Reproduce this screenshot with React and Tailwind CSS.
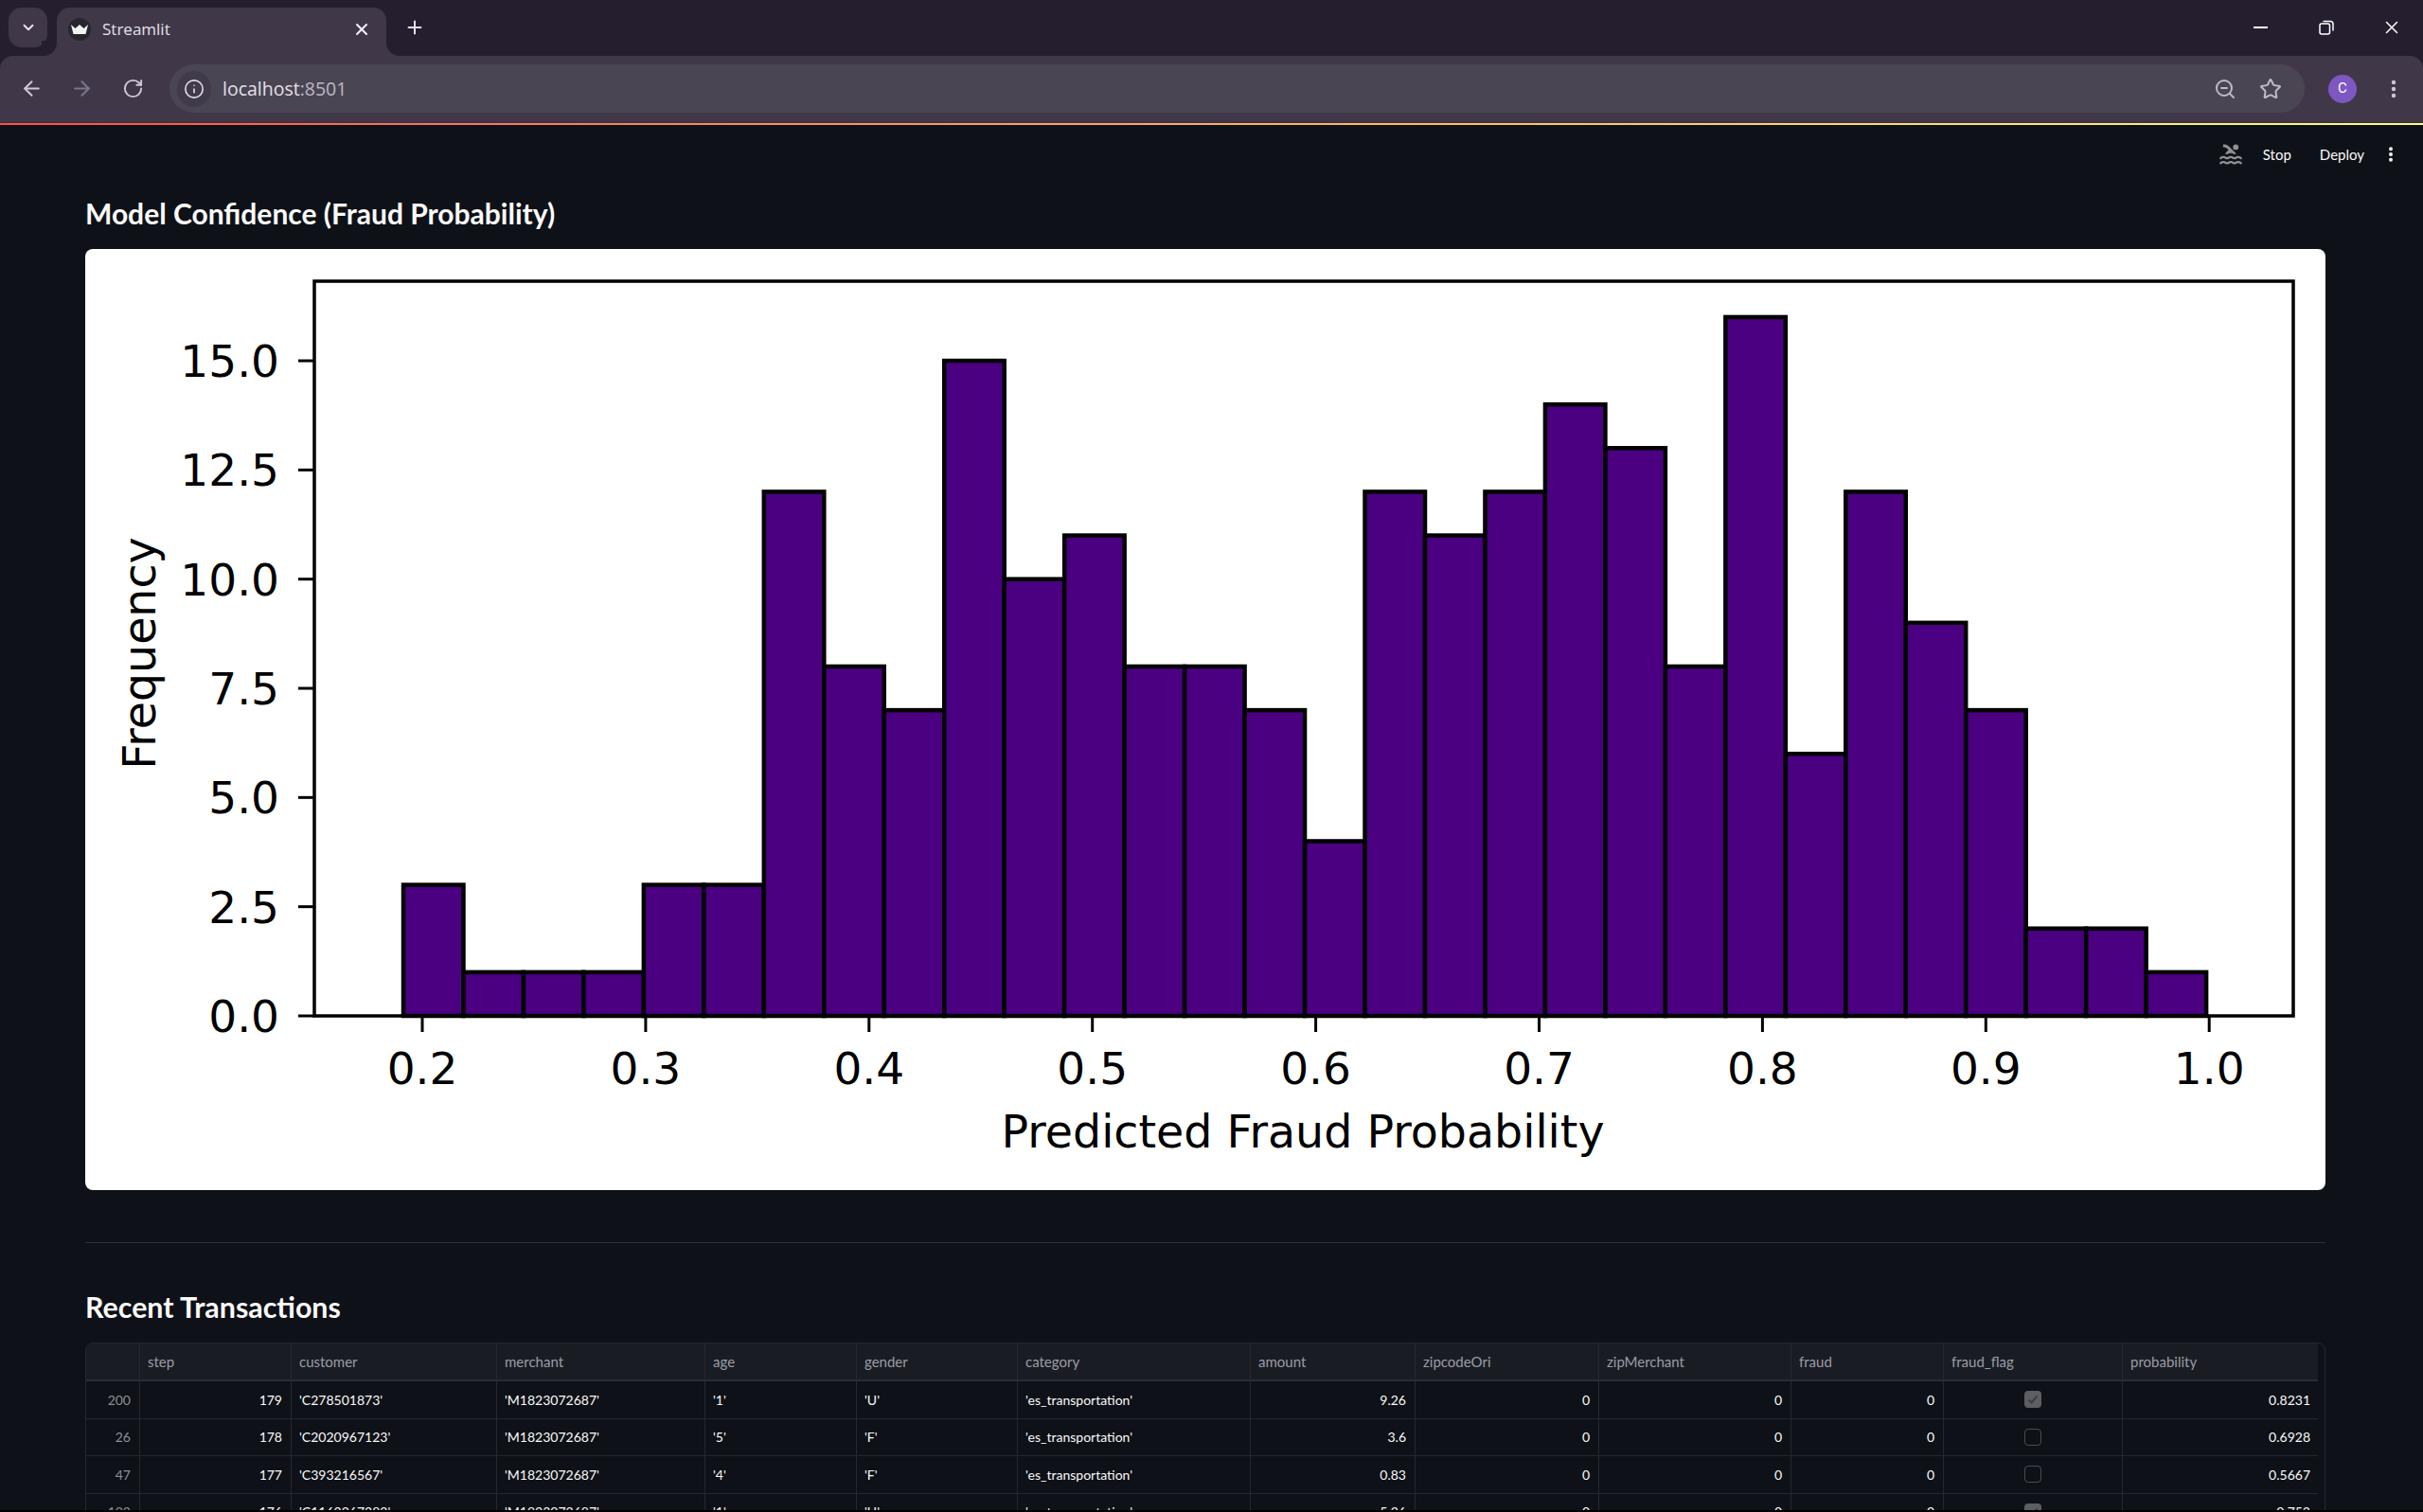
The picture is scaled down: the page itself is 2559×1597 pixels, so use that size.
import React from 'react';
import { ArrowLeft, ArrowRight, ChevronDown, EllipsisVertical, Info, Plus, RotateCw, Star, X, ZoomOut } from 'lucide-react';
import { MdPool } from 'react-icons/md';

const BINS = [3, 1, 1, 1, 3, 3, 12, 8, 7, 15, 10, 11, 8, 8, 7, 4, 12, 11, 12, 14, 13, 8, 16, 6, 12, 9, 7, 2, 2, 1];
const Y_TICKS = ['0.0', '2.5', '5.0', '7.5', '10.0', '12.5', '15.0'];
const X_TICKS = ['0.2', '0.3', '0.4', '0.5', '0.6', '0.7', '0.8', '0.9', '1.0'];

const COLUMNS = ['', 'step', 'customer', 'merchant', 'age', 'gender', 'category', 'amount', 'zipcodeOri', 'zipMerchant', 'fraud', 'fraud_flag', 'probability'];

const ROWS = [
    { idx: 200, step: 179, customer: "'C278501873'", age: "'1'", gender: "'U'", amount: '9.26', flag: true, prob: '0.8231' },
    { idx: 26, step: 178, customer: "'C2020967123'", age: "'5'", gender: "'F'", amount: '3.6', flag: false, prob: '0.6928' },
    { idx: 47, step: 177, customer: "'C393216567'", age: "'4'", gender: "'F'", amount: '0.83', flag: false, prob: '0.5667' },
    { idx: 102, step: 176, customer: "'C1162267282'", age: "'1'", gender: "'U'", amount: '5.26', flag: true, prob: '0.753' },
];

const GRID = 'grid grid-cols-[57px_160px_217px_220px_160px_170px_246px_174px_194px_203px_161px_189px_207px]';

function BrowserTabs() {
    return (
        <div className="flex h-[59px] items-start bg-[#251e2f] pt-2 pl-[9px]">
            <div className="flex h-[42px] w-[41px] items-center justify-center rounded-[14px] bg-[#403849] text-[#e8e4ee]">
                <ChevronDown size={18} strokeWidth={2.5} />
            </div>
            <div className="relative ml-[10px] flex h-[51px] w-[348px] items-center rounded-t-[14px] bg-[#403849] pb-[6px] pl-3 pr-4">
                <div className="absolute bottom-0 -left-4 h-4 w-4 bg-[#403849]">
                    <div className="h-full w-full rounded-br-[14px] bg-[#251e2f]" />
                </div>
                <div className="absolute -right-4 bottom-0 h-4 w-4 bg-[#403849]">
                    <div className="h-full w-full rounded-bl-[14px] bg-[#251e2f]" />
                </div>
                <div className="flex h-6 w-6 items-center justify-center rounded-full bg-[#26272e]">
                    <svg width="18" height="10" viewBox="0 0 18 10">
                        <polygon points="0,0 4.5,4 9,0 13.5,4 18,0 15.5,10 2.5,10" fill="#f2f2f2" />
                    </svg>
                </div>
                <span className="ml-3 font-['Open_Sans',sans-serif] text-[17px] text-[#e4e0ea]">Streamlit</span>
                <X size={20} strokeWidth={2.5} className="ml-auto text-[#f0edf4]" />
            </div>
            <Plus size={22} strokeWidth={2.2} className="ml-[19px] mt-[10px] text-[#e4e0ea]" />
            <div className="ml-auto mr-[22px] flex items-center pt-[10px] text-white">
                <div className="h-[2px] w-[15px] bg-white" />
                <svg width="16" height="16" viewBox="0 0 16 16" fill="none" stroke="white" strokeWidth="1.5" className="ml-[54px]">
                    <rect x="1" y="4" width="10.5" height="11" rx="2" />
                    <path d="M4.5 1.5h7.5a3 3 0 0 1 3 3v7" />
                </svg>
                <X size={22} strokeWidth={1.6} className="ml-[50px]" />
            </div>
        </div>
    );
}

function BrowserToolbar() {
    return (
        <div className="bg-[#251e2f]">
            <div className="flex h-[69px] items-center rounded-t-[14px] bg-[#403849] pl-[21px] pr-[19px] text-[#cfc8d8]">
                <ArrowLeft size={25} strokeWidth={1.9} />
                <ArrowRight size={25} strokeWidth={1.9} className="ml-[28px] text-[#7d7589]" />
                <RotateCw size={23} strokeWidth={2} className="ml-[30px]" />
                <div className="ml-[27px] flex h-[51px] flex-1 items-center rounded-full bg-[#4a4552] pl-2 pr-[24px]">
                    <div className="flex h-[38px] w-[36px] items-center justify-center rounded-full bg-[#403a4a] text-[#e0dbe6]">
                        <Info size={22} strokeWidth={1.8} />
                    </div>
                    <span className="ml-[12px] font-['Open_Sans',sans-serif] text-[19.5px] text-[#e4e0ea]">
                        localhost<span className="text-[#bdb7c6]">:8501</span>
                    </span>
                    <ZoomOut size={24} strokeWidth={2} className="ml-auto text-[#bfbac6]" />
                    <Star size={24} strokeWidth={2} className="ml-[24px] text-[#bfbac6]" />
                </div>
                <div className="ml-[25px] flex h-[30px] w-[30px] items-center justify-center rounded-full bg-[#7e57c2] font-['Roboto',sans-serif] text-[15px] text-white">C</div>
                <EllipsisVertical size={24} strokeWidth={2.4} className="ml-[27px] text-[#cfc8d8]" />
            </div>
            <div className="h-[2px] bg-[#3a3444]" />
            <div className="h-[2px] bg-gradient-to-r from-[#ff4b4b] to-[#fffd80]" />
        </div>
    );
}

function FraudHistogram() {
    // plot coordinates measured in page pixels, hence the viewBox offset
    const left = 332, right = 2422, top = 297, bottom = 1073;
    const binLeft = 426, binWidth = 63.47, unit = 46.13;
    const font = "'DejaVu Sans', sans-serif";

    return (
        <svg viewBox="90 263 2366 994" className="block h-full w-full">
            {BINS.map((n, i) => (
                <rect key={i} x={binLeft + i * binWidth} y={bottom - n * unit} width={binWidth} height={n * unit} fill="#4b0082" stroke="#000" strokeWidth="4.5" />
            ))}
            <rect x={left} y={top} width={right - left} height={bottom - top} fill="none" stroke="#000" strokeWidth="3.5" />
            {Y_TICKS.map((t, i) => {
                const y = bottom - i * 2.5 * unit;
                return (
                    <g key={t}>
                        <line x1="315" x2={left} y1={y} y2={y} stroke="#000" strokeWidth="3" />
                        <text x="295" y={y + 17} textAnchor="end" fontFamily={font} fontSize="47" fill="#000">{t}</text>
                    </g>
                );
            })}
            {X_TICKS.map((t, i) => {
                const x = 446 + i * 235.9;
                return (
                    <g key={t}>
                        <line x1={x} x2={x} y1={bottom} y2="1090" stroke="#000" strokeWidth="3" />
                        <text x={x} y="1145" textAnchor="middle" fontFamily={font} fontSize="47" fill="#000">{t}</text>
                    </g>
                );
            })}
            <text x="1376" y="1212" textAnchor="middle" fontFamily={font} fontSize="47.5" fill="#000">Predicted Fraud Probability</text>
            <text transform="translate(164 690) rotate(-90)" textAnchor="middle" fontFamily={font} fontSize="47.5" fill="#000">Frequency</text>
        </svg>
    );
}

function Flag({ checked }) {
    if (checked) {
        return (
            <div className="flex h-[18px] w-[18px] items-center justify-center rounded-[4px] bg-[#5c5e64]">
                <svg width="12" height="12" viewBox="0 0 12 12" fill="none" stroke="#3c3e44" strokeWidth="2">
                    <path d="M1.5 6.5l3 3 6-7" />
                </svg>
            </div>
        );
    }
    return <div className="h-[18px] w-[18px] rounded-[4px] border border-[#4a4c52]" />;
}

function Cell({ right, children, className = '' }) {
    return (
        <div className={`flex items-center overflow-hidden border-r border-[#25282f] pl-2 pr-[9px] last:border-r-0 ${right ? 'justify-end' : ''} ${className}`}>
            {children}
        </div>
    );
}

function TransactionsTable() {
    return (
        <div className="h-[200px] overflow-hidden rounded-t-[8px] border border-[#25282f] pr-[7px] font-['Lato',sans-serif] text-[14px]">
            <div className={`${GRID} h-[40px] border-b-2 border-[#2a2d34] bg-[#1a1c24] text-[15px] text-[#9a9da5]`}>
                {COLUMNS.map((c, i) => <Cell key={i}>{c}</Cell>)}
            </div>
            {ROWS.map(r => (
                <div key={r.idx} className={`${GRID} h-[39.5px] border-b border-[#25282f] text-[#fafafa]`}>
                    <Cell right className="text-[#8e9097]">{r.idx}</Cell>
                    <Cell right>{r.step}</Cell>
                    <Cell>{r.customer}</Cell>
                    <Cell>'M1823072687'</Cell>
                    <Cell>{r.age}</Cell>
                    <Cell>{r.gender}</Cell>
                    <Cell>'es_transportation'</Cell>
                    <Cell right>{r.amount}</Cell>
                    <Cell right>0</Cell>
                    <Cell right>0</Cell>
                    <Cell right>0</Cell>
                    <Cell className="justify-center"><Flag checked={r.flag} /></Cell>
                    <Cell right>{r.prob}</Cell>
                </div>
            ))}
        </div>
    );
}

export default function App() {
    return (
        <div className="flex h-[1597px] flex-col overflow-hidden bg-[#0e1117] font-['Lato',sans-serif]">
            <BrowserTabs />
            <BrowserToolbar />
            <div className="flex h-[64px] items-center justify-end pb-[2px] pr-[24px] text-[15px] text-[#fafafa]">
                <MdPool size={28} className="text-[#8f9094]" />
                <span className="ml-[20px]">Stop</span>
                <span className="ml-[30px]">Deploy</span>
                <EllipsisVertical size={20} strokeWidth={2.8} className="ml-[18px]" />
            </div>
            <div className="flex-1 overflow-hidden pl-[90px] pr-[103px] pt-[9px]">
                <h3 className="h-[40px] text-[30px] font-bold leading-[40px] text-[#fafafa]">Model Confidence (Fraud Probability)</h3>
                <div className="mt-[18px] h-[994px] rounded-[8px] bg-white">
                    <FraudHistogram />
                </div>
                <div className="mt-[55px] h-px bg-[#2e3036]" />
                <h3 className="mt-[47px] h-[40px] text-[30.4px] font-bold leading-[40px] text-[#fafafa]">Recent Transactions</h3>
                <div className="mt-[18px]">
                    <TransactionsTable />
                </div>
            </div>
            <div className="h-[2px] bg-black" />
        </div>
    );
}
